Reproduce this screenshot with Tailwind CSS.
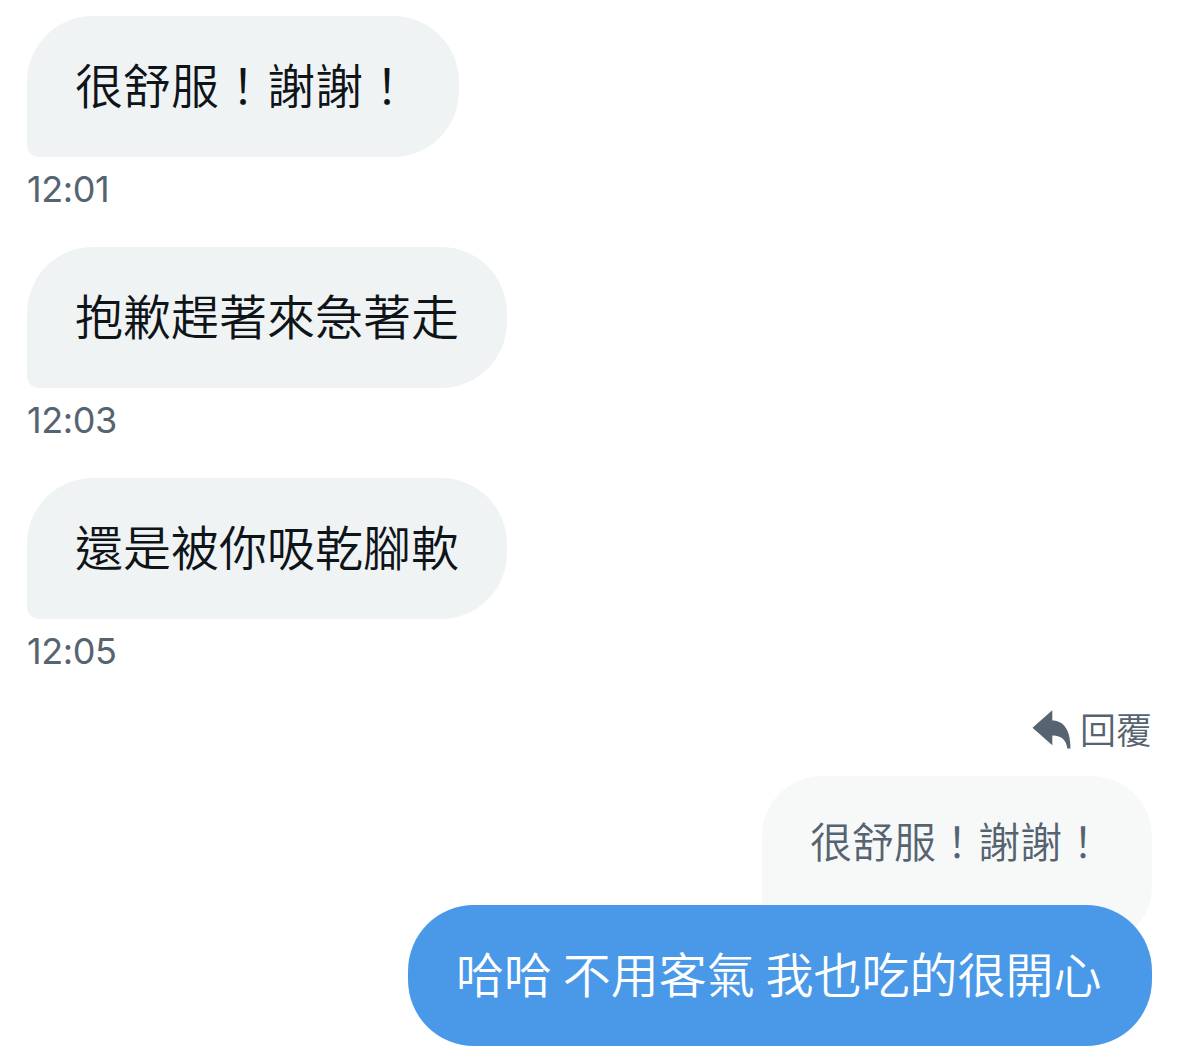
<!DOCTYPE html>
<html lang="zh-Hant">
<head>
  <meta charset="UTF-8">
  <meta name="viewport" content="width=device-width, initial-scale=1.0">
  <title>Chat</title>
  <script src="https://cdn.jsdelivr.net/npm/@tailwindcss/browser@4"></script>
</head>
<body class="bg-white font-['Noto_Sans_CJK_TC',sans-serif] overflow-hidden">
<main class="flex flex-col w-[1177px] h-[1057px] pt-4 pl-[27px] pr-[25px]">
  <!-- Received messages -->
  <div class="flex flex-col items-start h-[231px]">
    <div class="h-[141px] w-[432px] pl-12 pb-2 flex items-center rounded-[66px] rounded-bl-[12px] bg-[#eff3f4] text-[#0f1419] text-[48px] leading-[70px] font-[350] whitespace-nowrap">很舒服！謝謝！</div>
    <time class="mt-[10px] font-['Inter',sans-serif] text-[36px] leading-[44px] tracking-[-0.4px] text-[#566370]">12:01</time>
  </div>
  <div class="flex flex-col items-start h-[231px]">
    <div class="h-[141px] w-[480px] pl-12 pb-2 flex items-center rounded-[66px] rounded-bl-[12px] bg-[#eff3f4] text-[#0f1419] text-[48px] leading-[70px] font-[350] whitespace-nowrap">抱歉趕著來急著走</div>
    <time class="mt-[10px] font-['Inter',sans-serif] text-[36px] leading-[44px] tracking-[-0.4px] text-[#566370]">12:03</time>
  </div>
  <div class="flex flex-col items-start h-[231px]">
    <div class="h-[141px] w-[480px] pl-12 pb-2 flex items-center rounded-[66px] rounded-bl-[12px] bg-[#eff3f4] text-[#0f1419] text-[48px] leading-[70px] font-[350] whitespace-nowrap">還是被你吸乾腳軟</div>
    <time class="mt-[10px] font-['Inter',sans-serif] text-[36px] leading-[44px] tracking-[-0.4px] text-[#566370]">12:05</time>
  </div>

  <!-- Reply -->
  <div class="flex flex-col items-end -mt-[2px]">
    <div class="flex items-center h-[44px] text-[#566370] text-[36px] leading-[44px]">
      <svg class="w-10 h-10 mr-2" viewBox="0 0 40 40" fill="currentColor"><path d="M20.300 1.300V11.500C31 11.500 38.500 20 38.500 39.400H35.300C34.500 31.500 29.500 26.300 20.300 26.500V36.200L.5 18.700z"/></svg>
      <span class="pb-[2px] font-[350]">回覆</span>
    </div>
    <div class="mt-[25px] h-[170px] w-[390px] pl-12 pt-[34px] rounded-[60px] rounded-bl-[12px] bg-[#f7f9f9] text-[#566370] text-[42px] leading-[60px] font-[350] whitespace-nowrap">很舒服！謝謝！</div>
    <div class="-mt-[41px] h-[141px] w-[744px] pl-12 pb-2 flex items-center rounded-[66px] bg-[#4a99e9] text-white text-[48px] leading-[70px] font-[350] whitespace-nowrap">哈哈 不用客氣 我也吃的很開心</div>
  </div>
</main>
</body>
</html>
